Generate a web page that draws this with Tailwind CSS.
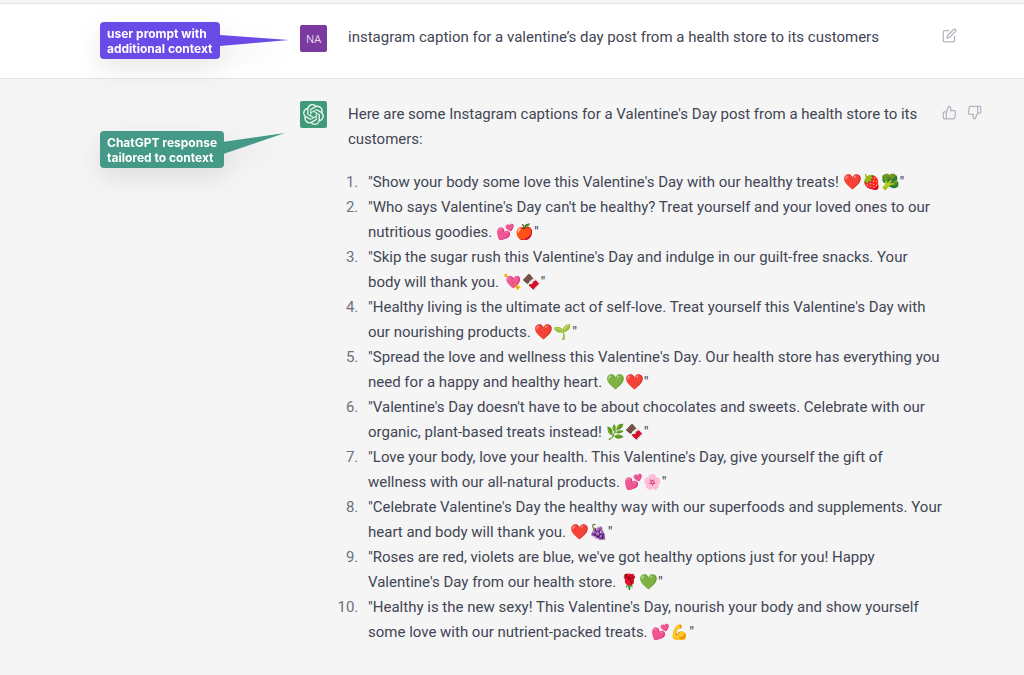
<!DOCTYPE html>
<html lang="en">

<head>
    <meta charset="UTF-8" />
    <meta name="viewport" content="width=device-width, initial-scale=1" />
    <script src="https://cdn.jsdelivr.net/npm/@tailwindcss/browser@4"></script>
    <title>Valentine's Day captions</title>
</head>

<body class="min-h-screen bg-[#f5f5f5] pt-[3px] font-['Roboto','Liberation_Sans',sans-serif] text-[15px] leading-[25px] text-[#414554]">
    <main>
        <!-- User prompt -->
        <section class="relative flex items-start border-y border-[#e3e3e5] bg-white pt-[20px] pb-[24px] pl-[300px]">
            <!-- Callout -->
            <div class="absolute top-[18px] left-[100px] flex items-start font-['Inter',sans-serif] text-[12px] leading-[15px] font-bold text-white drop-shadow-[0_10px_12px_rgba(0,0,0,0.09)]">
                <p class="w-[120px] rounded-[4px] bg-[#6b4be8] pt-[4px] pb-[3px] pl-[7px]">user prompt with<br />additional context</p>
                <svg class="mt-[13px] h-[12px] w-[69px] text-[#6b4be8]" viewBox="0 0 69 12" fill="currentColor">
                    <path d="M-1 0L69 5L-1 11z" />
                </svg>
            </div>

            <div class="mt-px flex h-[27px] w-[27px] shrink-0 items-center justify-center rounded-xs bg-[#7b3aa0] font-['Open_Sans',sans-serif] text-[11px] text-[#e6d8ee]">NA</div>
            <p class="ml-[21px] flex-1 pt-px pb-[4px]">instagram caption for a valentine’s day post from a health store to its customers</p>
            <div class="w-[82px] shrink-0 pt-[4px]">
                <button type="button" aria-label="Edit" class="block text-[#b4b4c2]">
                    <svg class="h-[15px] w-[15px]" viewBox="0 0 24 24" fill="none" stroke="currentColor" stroke-width="2" stroke-linecap="round" stroke-linejoin="round">
                        <path d="M11 4H4a2 2 0 0 0-2 2v14a2 2 0 0 0 2 2h14a2 2 0 0 0 2-2v-7" />
                        <path d="M18.500 2.500a2.121 2.121 0 0 1 3 3L12 15l-4 1 1-4 9.500-9.500z" />
                    </svg>
                </button>
            </div>
        </section>

        <!-- Reply -->
        <section class="relative flex items-start pt-[22px] pb-[30px] pl-[300px]">
            <!-- Callout -->
            <div class="absolute top-[52px] left-[100px] flex items-start font-['Inter',sans-serif] text-[12px] leading-[15px] font-bold text-white drop-shadow-[0_10px_12px_rgba(0,0,0,0.09)]">
                <p class="w-[124px] rounded-[4px] bg-[#449a86] pt-[4px] pb-[3px] pl-[7px]">ChatGPT response<br />tailored to context</p>
                <svg class="mt-[2px] h-[21px] w-[61px] text-[#449a86]" viewBox="0 0 61 21" fill="currentColor">
                    <path d="M-1 9L61 0L-1 21z" />
                </svg>
            </div>

            <div class="flex h-[27px] w-[27px] shrink-0 items-center justify-center rounded-xs bg-[#419a77] text-[#e9f5f0]">
                <svg class="h-[21px] w-[21px]" viewBox="0 0 24 24" fill="currentColor">
                    <path d="M22.282 9.821a5.985 5.985 0 0 0-.516-4.910 6.046 6.046 0 0 0-6.510-2.900A6.065 6.065 0 0 0 4.981 4.182a5.985 5.985 0 0 0-3.998 2.900 6.046 6.046 0 0 0 .743 7.097 5.980 5.980 0 0 0 .511 4.911 6.051 6.051 0 0 0 6.515 2.900A5.985 5.985 0 0 0 13.260 24a6.056 6.056 0 0 0 5.772-4.206 5.990 5.990 0 0 0 3.998-2.900 6.056 6.056 0 0 0-.748-7.073zM13.260 22.430a4.476 4.476 0 0 1-2.876-1.041l.142-.080 4.778-2.758a.795.795 0 0 0 .393-.681v-6.737l2.020 1.169a.071.071 0 0 1 .038.052v5.583a4.504 4.504 0 0 1-4.495 4.493zM3.600 18.304a4.471 4.471 0 0 1-.535-3.014l.142.085 4.783 2.758a.771.771 0 0 0 .781 0l5.843-3.368v2.332a.080.080 0 0 1-.033.062L9.740 19.950a4.499 4.499 0 0 1-6.140-1.646zM2.341 7.896a4.485 4.485 0 0 1 2.366-1.973V11.600a.766.766 0 0 0 .388.677l5.814 3.354-2.020 1.169a.076.076 0 0 1-.071 0l-4.830-2.787A4.504 4.504 0 0 1 2.341 7.872zm16.596 3.856l-5.833-3.387L15.119 7.200a.076.076 0 0 1 .071 0l4.830 2.792a4.494 4.494 0 0 1-.676 8.104v-5.678a.790.790 0 0 0-.407-.666zm2.011-3.023l-.142-.085-4.774-2.782a.776.776 0 0 0-.785 0L9.409 9.230V6.897a.066.066 0 0 1 .028-.061l4.830-2.787a4.499 4.499 0 0 1 6.681 4.660zM8.307 12.863l-2.020-1.164a.080.080 0 0 1-.038-.057V6.075a4.499 4.499 0 0 1 7.376-3.454l-.142.080L8.704 5.460a.795.795 0 0 0-.393.681zm1.097-2.365l2.602-1.500 2.607 1.500v2.999l-2.597 1.500-2.607-1.500z" />
                </svg>
            </div>
            <div class="ml-[21px] flex-1 pt-px">
                <p>Here are some Instagram captions for a Valentine's Day post from a health store to its<br />customers:</p>
                <ol class="mt-[18px] list-decimal pl-[14px] marker:text-[#6d7080] [&>li]:pl-[6px]">
                    <li>"Show your body some love this Valentine's Day with our healthy treats! ❤️🍓🥦"</li>
                    <li>"Who says Valentine's Day can't be healthy? Treat yourself and your loved ones to our<br />nutritious goodies. 💕🍎"</li>
                    <li>"Skip the sugar rush this Valentine's Day and indulge in our guilt-free snacks. Your<br />body will thank you. 💘🍫"</li>
                    <li>"Healthy living is the ultimate act of self-love. Treat yourself this Valentine's Day with<br />our nourishing products. ❤️🌱"</li>
                    <li>"Spread the love and wellness this Valentine's Day. Our health store has everything you<br />need for a happy and healthy heart. 💚❤️"</li>
                    <li>"Valentine's Day doesn't have to be about chocolates and sweets. Celebrate with our<br />organic, plant-based treats instead! 🌿🍫"</li>
                    <li>"Love your body, love your health. This Valentine's Day, give yourself the gift of<br />wellness with our all-natural products. 💕🌸"</li>
                    <li>"Celebrate Valentine's Day the healthy way with our superfoods and supplements. Your<br />heart and body will thank you. ❤️🍇"</li>
                    <li>"Roses are red, violets are blue, we've got healthy options just for you! Happy<br />Valentine's Day from our health store. 🌹💚"</li>
                    <li>"Healthy is the new sexy! This Valentine's Day, nourish your body and show yourself<br />some love with our nutrient-packed treats. 💕💪"</li>
                </ol>
            </div>
            <div class="flex w-[82px] shrink-0 gap-[10px] pt-[4px] text-[#b4b4c2]">
                <button type="button" aria-label="Good response" class="block h-[15px]">
                    <svg class="h-[15px] w-[15px]" viewBox="0 0 24 24" fill="none" stroke="currentColor" stroke-width="2" stroke-linecap="round" stroke-linejoin="round">
                        <path d="M14 9V5a3 3 0 0 0-3-3l-4 9v11h11.280a2 2 0 0 0 2-1.700l1.380-9a2 2 0 0 0-2-2.300zM7 22H4a2 2 0 0 1-2-2v-7a2 2 0 0 1 2-2h3" />
                    </svg>
                </button>
                <button type="button" aria-label="Bad response" class="block h-[15px]">
                    <svg class="h-[15px] w-[15px]" viewBox="0 0 24 24" fill="none" stroke="currentColor" stroke-width="2" stroke-linecap="round" stroke-linejoin="round">
                        <path d="M10 15v4a3 3 0 0 0 3 3l4-9V2H5.720a2 2 0 0 0-2 1.700l-1.380 9a2 2 0 0 0 2 2.300zm7-13h2.670A2.310 2.310 0 0 1 22 4v7a2.310 2.310 0 0 1-2.330 2H17" />
                    </svg>
                </button>
            </div>
        </section>
    </main>
</body>

</html>
